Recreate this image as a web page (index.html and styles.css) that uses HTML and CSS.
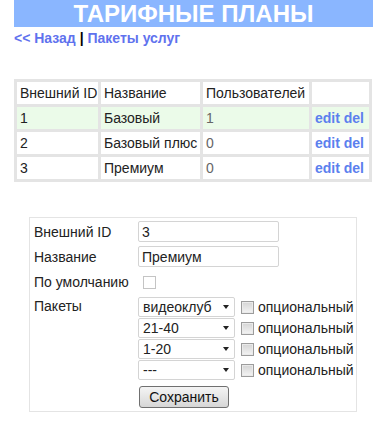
FILE: index.html
```html
<!DOCTYPE html>
<html lang="ru">
<head>
    <meta charset="UTF-8">
    <title>Тарифные планы</title>
    <link rel="stylesheet" href="styles.css">
</head>
<body>
    <div class="page">
        <h1 class="title">ТАРИФНЫЕ ПЛАНЫ</h1>
        <div class="nav">
            <a href="#">&lt;&lt; Назад</a> | <a href="#">Пакеты услуг</a>
        </div>

        <table class="plans">
            <tr>
                <th class="c-id">Внешний ID</th>
                <th class="c-name">Название</th>
                <th class="c-users">Пользователей</th>
                <th class="c-act"></th>
            </tr>
            <tr class="current">
                <td>1</td>
                <td>Базовый</td>
                <td class="num">1</td>
                <td class="act"><a href="#">edit</a> <a href="#">del</a></td>
            </tr>
            <tr>
                <td>2</td>
                <td>Базовый плюс</td>
                <td class="num">0</td>
                <td class="act"><a href="#">edit</a> <a href="#">del</a></td>
            </tr>
            <tr>
                <td>3</td>
                <td>Премиум</td>
                <td class="num">0</td>
                <td class="act"><a href="#">edit</a> <a href="#">del</a></td>
            </tr>
        </table>

        <form class="plan-form">
            <label class="lbl" for="extId">Внешний ID</label>
            <div><input type="text" id="extId" class="txt" value="3"></div>

            <label class="lbl" for="name">Название</label>
            <div><input type="text" id="name" class="txt" value="Премиум"></div>

            <label class="lbl" for="isDefault">По умолчанию</label>
            <div class="chk-row"><input type="checkbox" id="isDefault" class="chk chk-plain"></div>

            <div class="lbl lbl-top">Пакеты</div>
            <div class="packs">
                <div class="pack">
                    <span class="sel"><select><option>видеоклуб</option></select></span>
                    <label class="opt"><input type="checkbox" class="chk">опциональный</label>
                </div>
                <div class="pack">
                    <span class="sel"><select><option>21-40</option></select></span>
                    <label class="opt"><input type="checkbox" class="chk">опциональный</label>
                </div>
                <div class="pack">
                    <span class="sel"><select><option>1-20</option></select></span>
                    <label class="opt"><input type="checkbox" class="chk">опциональный</label>
                </div>
                <div class="pack">
                    <span class="sel"><select><option>---</option></select></span>
                    <label class="opt"><input type="checkbox" class="chk">опциональный</label>
                </div>
                <button type="button" class="save">Сохранить</button>
            </div>
        </form>
    </div>
</body>
</html>
```

FILE: styles.css
```css
body {
    margin: 0;
    font-family: "Liberation Sans", Arial, sans-serif;
    font-size: 14px;
    color: #222;
    background: #fff;
}
.page {
    margin-left: 14px;
    width: 359px;
}
.title {
    margin: 0;
    height: 27px;
    line-height: 28px;
    background: #8ab6ff;
    color: #fff;
    font-size: 24px;
    font-weight: bold;
    text-align: center;
}
.nav {
    margin-top: 4px;
    font-weight: bold;
    color: #000;
    line-height: 15px;
}
.nav a {
    color: #5f72ee;
    text-decoration: none;
}
.plans {
    margin-top: 33px;
    width: 358px;
    border-collapse: separate;
    border-spacing: 3px;
    background: #e4e4e4;
    table-layout: fixed;
}
.plans th, .plans td {
    box-sizing: border-box;
    background: #fff;
    padding: 3px 3px;
    height: 22px;
    text-align: left;
    font-weight: normal;
    white-space: nowrap;
    line-height: 16px;
}
.plans .c-id { width: 81px; }
.plans .c-name { width: 99px; }
.plans .c-users { width: 106px; }
.plans .c-act { width: 57px; }
.plans tr.current td {
    background: #ebfbe9;
}
.plans .num {
    color: #666;
}
.plans .act {
    font-weight: bold;
}
.plans .act a {
    color: #5b80ee;
    text-decoration: none;
}
.plan-form {
    margin: 35px 0 0 15px;
    width: 328px;
    box-sizing: border-box;
    border: 1px solid #e4e4e4;
    padding: 3px 0 3px 4px;
    display: grid;
    grid-template-columns: 104px 1fr;
    row-gap: 4px;
    align-items: center;
}
.lbl-top {
    align-self: start;
    padding-top: 1px;
}
.txt {
    box-sizing: border-box;
    width: 141px;
    height: 21px;
    border: 1px solid #d4d4d4;
    border-radius: 2px;
    padding: 0 3px;
    font: inherit;
    color: #222;
}
.chk-row {
    height: 22px;
    display: flex;
    align-items: center;
}
.chk {
    appearance: none;
    -webkit-appearance: none;
    box-sizing: border-box;
    width: 13px;
    height: 13px;
    margin: 0;
    border: 1px solid #9c9c9c;
    background: linear-gradient(#d4d4d4, #f4f4f4);
    box-shadow: inset 0 0 0 1px #eaeaea;
}
.chk-plain {
    margin-left: 5px;
    border-color: #c4c4c4;
    background: #fff;
    box-shadow: none;
}
.packs {
    display: flex;
    flex-direction: column;
    align-items: flex-start;
    gap: 1px;
}
.pack {
    display: flex;
    align-items: center;
    height: 20px;
}
.sel {
    position: relative;
    display: inline-block;
}
.sel select {
    appearance: none;
    -webkit-appearance: none;
    box-sizing: border-box;
    width: 97px;
    height: 20px;
    border: 1px solid #d4d4d4;
    border-radius: 2px;
    background: #fff;
    padding: 0 4px;
    font: inherit;
    color: #222;
}
.sel::after {
    content: "";
    position: absolute;
    right: 6px;
    top: 8px;
    border-left: 3px solid transparent;
    border-right: 3px solid transparent;
    border-top: 4px solid #222;
    pointer-events: none;
}
.opt {
    display: flex;
    align-items: center;
    gap: 4px;
    margin-left: 6px;
    font-size: 14px;
}
.save {
    margin-top: 5px;
    margin-left: 1px;
    width: 90px;
    height: 22px;
    border: 1px solid #707070;
    border-radius: 3px;
    background: linear-gradient(#f4f4f4, #e6e6e6 50%, #d6d6d6);
    font-family: inherit;
    font-size: 14px;
    color: #111;
    padding: 0;
}
```
